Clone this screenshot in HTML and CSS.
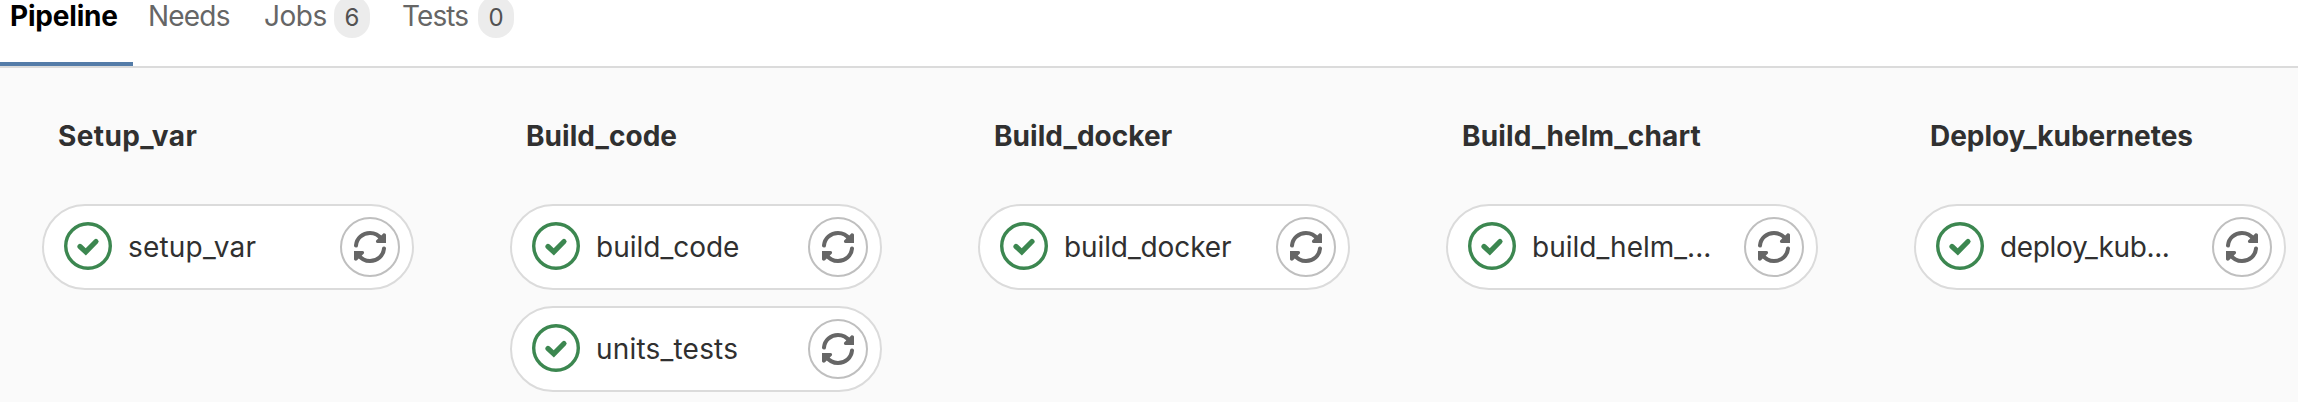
FILE: index.html
```html
<!DOCTYPE html>
<html lang="en">
<head>
<meta charset="utf-8">
<title>Pipeline</title>
<link rel="stylesheet" href="styles.css">
</head>
<body>
<svg class="sprite" aria-hidden="true">
  <symbol id="check" viewBox="0 0 48 48"><circle cx="24" cy="24" r="22.3" fill="none" stroke="currentColor" stroke-width="3.4"/><path d="M16 24.500 21.800 29.800 32 19.500" fill="none" stroke="currentColor" stroke-width="5.200" stroke-linejoin="miter" stroke-linecap="round"/></symbol>
  <symbol id="retry" viewBox="0 0 32 32"><g id="half"><path d="M2 14.5C2.6 7.4 8.7 2 16 2c4.700 0 8.900 2.300 11.500 6" fill="none" stroke="currentColor" stroke-width="4" stroke-linecap="round"/><path d="M32 4v8h-8.500c-1.500 0-2.100-1.800-1.100-2.800L29 2.700c1.200-1 3-.2 3 1.300z" fill="currentColor"/></g><use href="#half" transform="rotate(180 16 16)"/></symbol>
</svg>
<nav class="tabs">
  <a class="tab active"><span>Pipeline</span></a>
  <a class="tab needs"><span>Needs</span></a>
  <a class="tab jobs"><span>Jobs</span><span class="badge">6</span></a>
  <a class="tab tests"><span>Tests</span><span class="badge">0</span></a>
</nav>
<main class="graph">
  <section class="stage setup"><h2>Setup_var</h2>
    <div class="job"><svg class="status"><use href="#check"/></svg><span class="name">setup_var</span><button class="retry" aria-label="Retry"><svg><use href="#retry"/></svg></button></div>
  </section>
  <section class="stage code"><h2>Build_code</h2>
    <div class="job"><svg class="status"><use href="#check"/></svg><span class="name">build_code</span><button class="retry" aria-label="Retry"><svg><use href="#retry"/></svg></button></div>
    <div class="job units"><svg class="status"><use href="#check"/></svg><span class="name">units_tests</span><button class="retry" aria-label="Retry"><svg><use href="#retry"/></svg></button></div>
  </section>
  <section class="stage docker"><h2>Build_docker</h2>
    <div class="job"><svg class="status"><use href="#check"/></svg><span class="name">build_docker</span><button class="retry" aria-label="Retry"><svg><use href="#retry"/></svg></button></div>
  </section>
  <section class="stage helm"><h2>Build_helm_chart</h2>
    <div class="job"><svg class="status"><use href="#check"/></svg><span class="name">build_helm_...</span><button class="retry" aria-label="Retry"><svg><use href="#retry"/></svg></button></div>
  </section>
  <section class="stage deploy"><h2>Deploy_kubernetes</h2>
    <div class="job"><svg class="status"><use href="#check"/></svg><span class="name">deploy_kub...</span><button class="retry" aria-label="Retry"><svg><use href="#retry"/></svg></button></div>
  </section>
</main>
</body>
</html>
```
FILE: styles.css
```css
* { box-sizing: border-box; }
body { margin: 0; height: 402px; overflow: hidden; background: #fafafa; color: #303030; font-family: Inter, "Liberation Sans", sans-serif; font-size: 28px; }
.sprite { display: none; }
.tabs { display: flex; height: 68px; background: #fff; border-bottom: 2px solid #dbdbdb; color: #666; }
.tab { display: flex; flex: none; height: 66px; line-height: 33px; white-space: nowrap; }
.active { width: 133px; padding-left: 10px; border-bottom: 4px solid #547ca8; color: #000; font-weight: 650; letter-spacing: -0.2px; }
.needs { width: 131px; padding-left: 15px; letter-spacing: -0.8px; }
.jobs { width: 138px; letter-spacing: -0.5px; }
.jobs > :first-child { width: 70px; }
.tests { letter-spacing: -0.9px; }
.tests > :first-child { width: 76px; }
.badge { width: 36px; height: 42px; margin-top: -4px; border-radius: 18px; background: #ececec; color: #525252; font-size: 24px; line-height: 43px; letter-spacing: 0; text-align: center; }
.graph { display: flex; gap: 96px; padding: 48px 0 0 42px; }
.stage { flex: none; width: 372px; display: flex; flex-direction: column; gap: 16px; }
h2 { margin: 0 0 32px; padding-left: 16px; font-size: 28px; font-weight: 650; line-height: 41px; height: 40px; white-space: nowrap; }
.setup h2 { letter-spacing: 0.4px; }
.code h2, .docker h2 { letter-spacing: 0.05px; }
.helm h2 { letter-spacing: 0.15px; }
.deploy h2 { letter-spacing: -0.05px; }
.job { display: flex; align-items: center; height: 86px; padding: 0 12px 0 20px; border: 2px solid #dbdbdb; border-radius: 43px; background: #fff; }
.status { flex: none; width: 48px; height: 48px; margin-top: -2px; color: #3c8750; }
.name { flex: 1; margin-left: 16px; white-space: nowrap; }
.setup .name, .units .name { letter-spacing: 0.2px; }
.docker .name { letter-spacing: -0.1px; }
.deploy .name { letter-spacing: -0.35px; }
.retry { display: grid; place-items: center; flex: none; width: 60px; height: 60px; padding: 0; border: 2px solid #bfbfbf; border-radius: 50%; background: #fff; color: #666; }
.retry svg { width: 32px; height: 32px; }
```
